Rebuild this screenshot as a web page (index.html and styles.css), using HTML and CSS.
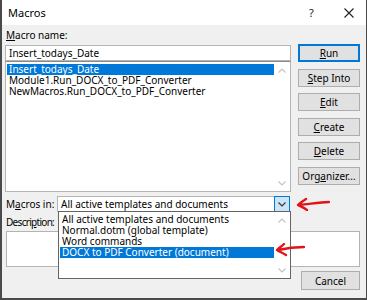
FILE: index.html
```html
<!DOCTYPE html>
<html>
<head>
<meta charset="utf-8">
<link rel="stylesheet" href="styles.css">
</head>
<body>
<div class="window">
  <div class="titlebar">
    <span class="title">Macros</span>
    <span class="help">?</span>
    <span class="close"><svg width="10" height="10" viewBox="0 0 10 10"><path d="M0.5 0.5 L9.5 9.5 M9.5 0.5 L0.5 9.5" stroke="#222" stroke-width="1.1" fill="none"/></svg></span>
  </div>
  <div class="body">
    <div class="main">
      <div class="left">
        <div class="label"><u>M</u>acro name:</div>
        <div class="namebox">Insert_todays_Date</div>
        <div class="listbox">
          <div class="items">
            <div class="item sel">Insert_todays_Date</div>
            <div class="item">Module1.Run_DOCX_to_PDF_Converter</div>
            <div class="item">NewMacros.Run_DOCX_to_PDF_Converter</div>
          </div>
          <div class="scroll">
            <svg class="chev" width="8" height="5" viewBox="0 0 8 5"><path d="M0.5 4.5 L4 1 L7.5 4.5" stroke="#c2c2c2" stroke-width="1.1" fill="none"/></svg>
            <svg class="chev" width="8" height="5" viewBox="0 0 8 5"><path d="M0.5 0.5 L4 4 L7.5 0.5" stroke="#c2c2c2" stroke-width="1.1" fill="none"/></svg>
          </div>
        </div>
      </div>
      <div class="buttons">
        <div class="btn default"><u>R</u>un</div>
        <div class="btn"><u>S</u>tep Into</div>
        <div class="btn"><u>E</u>dit</div>
        <div class="btn"><u>C</u>reate</div>
        <div class="btn"><u>D</u>elete</div>
        <div class="btn">Org<u>a</u>nizer...</div>
      </div>
    </div>
    <div class="inrow">
      <div class="label">M<u>a</u>cros in:</div>
      <div class="combo">
        <span class="combotext">All active templates and documents</span>
        <span class="combobtn"><svg width="8" height="5" viewBox="0 0 8 5"><path d="M0.5 0.5 L4 4 L7.5 0.5" stroke="#333" stroke-width="1.1" fill="none"/></svg></span>
      </div>
    </div>
    <div class="label desc">Descri<u>p</u>tion:</div>
    <div class="descbox"></div>
    <div class="footer">
      <div class="btn cancel">Cancel</div>
    </div>
  </div>

  <div class="dropdown">
    <div class="items">
      <div class="item">All active templates and documents</div>
      <div class="item">Normal.dotm (global template)</div>
      <div class="item">Word commands</div>
      <div class="item sel">DOCX to PDF Converter (document)</div>
    </div>
    <div class="scroll">
      <svg class="chev" width="8" height="5" viewBox="0 0 8 5"><path d="M0.5 4.5 L4 1 L7.5 4.5" stroke="#c2c2c2" stroke-width="1.1" fill="none"/></svg>
      <svg class="chev" width="8" height="5" viewBox="0 0 8 5"><path d="M0.5 0.5 L4 4 L7.5 0.5" stroke="#c2c2c2" stroke-width="1.1" fill="none"/></svg>
    </div>
  </div>

  <svg class="arrow arrow1" width="34" height="14" viewBox="0 0 34 14"><path d="M33 5 C24 5 14 7 3 8 M10 2 C7 4 4 6 2 8 C5 9 8 11 11 13" stroke="#e0141a" stroke-width="2.4" fill="none" stroke-linecap="round" stroke-linejoin="round"/></svg>
  <svg class="arrow arrow2" width="30" height="14" viewBox="0 0 30 14"><path d="M29 4 C22 4 12 5 3 7 M9 1 C7 3 4 5 2 7 C5 9 8 10 11 12" stroke="#e0141a" stroke-width="2.4" fill="none" stroke-linecap="round" stroke-linejoin="round"/></svg>
</div>
</body>
</html>
```

FILE: styles.css
```css
* { box-sizing: border-box; }
html, body { margin: 0; padding: 0; background: #fff; }
body {
  font-family: "Noto Sans", "Open Sans", sans-serif;
  font-size: 10px;
  color: #000;
}
.window {
  position: relative;
  width: 367px;
  height: 300px;
  border: 1px solid #4a4a4a;
  border-top: none;
  border-left-width: 2px;
  border-bottom-width: 2px;
  background: #f0f0f0;
  overflow: hidden;
}
.titlebar {
  height: 25px;
  background: #fff;
  display: flex;
  align-items: center;
  padding-left: 6px;
}
.title { font-size: 11px; flex: 1; }
.help { font-size: 11px; width: 35px; color: #222; }
.close { width: 22px; display: flex; align-items: center; }
.body {
  padding: 0 6px 0 3px;
}
.label { line-height: 16px; white-space: nowrap; }
.main {
  display: flex;
  gap: 7px;
  padding-top: 2px;
}
.left { width: 286px; }
.left .label { margin: 0 0 2px 1px; }
.namebox {
  height: 16px;
  border: 1px solid #b4b4b4;
  background: #fff;
  padding-left: 3px;
  line-height: 14px;
}
.listbox {
  height: 131px;
  border: 1px solid #b4b4b4;
  border-top-color: #8a8a8a;
  background: #fff;
  display: flex;
  padding: 1px 0 1px 1px;
}
.items { flex: 1; padding-top: 1px; }
.item {
  height: 11px;
  line-height: 11px;
  padding-left: 2px;
  white-space: nowrap;
}
.item.sel { background: #0078d7; color: #fff; }
.scroll {
  width: 16px;
  display: flex;
  flex-direction: column;
  justify-content: space-between;
  align-items: center;
  padding: 5px 0 4px;
}
.buttons {
  display: flex;
  flex-direction: column;
  gap: 6.6px;
  padding-top: 17px;
}
.btn {
  width: 62px;
  height: 18px;
  border: 1px solid #adadad;
  background: #e1e1e1;
  display: flex;
  align-items: center;
  justify-content: center;
  font-size: 10px;
}
.btn.default { border: 2px solid #0078d7; }
.inrow {
  display: flex;
  align-items: center;
  margin-top: 4px;
  padding-left: 1px;
}
.inrow .label { width: 51px; }
.combo {
  width: 233px;
  height: 16px;
  border: 1px solid #b4b4b4;
  background: #fff;
  display: flex;
  align-items: center;
}
.combotext { flex: 1; padding-left: 3px; }
.combobtn {
  width: 16px;
  height: 16px;
  margin: -1px -1px -1px 0;
  border: 1px solid #0078d7;
  background: #cce4f7;
  display: flex;
  align-items: center;
  justify-content: center;
}
.desc { margin-top: 2px; padding-left: 1px; letter-spacing: -0.7px; }
.descbox {
  height: 36px;
  margin: 1px 0 0 1px;
  border: 1px solid #b4b4b4;
  background: #fff;
}
.footer {
  display: flex;
  justify-content: flex-end;
  margin-top: 4px;
}
.btn.cancel { width: 59px; height: 19px; }
.dropdown {
  position: absolute;
  left: 56px;
  top: 211px;
  width: 233px;
  height: 68px;
  border: 1px solid #646464;
  background: #fff;
  display: flex;
  padding: 1px 0 1px 1px;
}
.dropdown .items { padding-top: 1px; }
.arrow { position: absolute; }
.arrow1 { left: 294px; top: 197px; }
.arrow2 { left: 273px; top: 243px; }
```
